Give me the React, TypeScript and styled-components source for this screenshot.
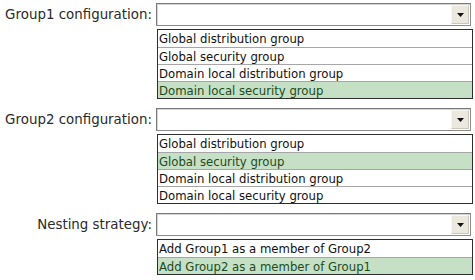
import styled, { createGlobalStyle } from "styled-components";

const GlobalStyle = createGlobalStyle`
  html, body { margin: 0; padding: 0; background: #fff; }
  body { width: 475px; height: 280px; overflow: hidden; }
`;

type Field = {
  label: string;
  options: string[];
  selected: number;
};

const fields: Field[] = [
  {
    label: "Group1 configuration:",
    options: [
      "Global distribution group",
      "Global security group",
      "Domain local distribution group",
      "Domain local security group",
    ],
    selected: 3,
  },
  {
    label: "Group2 configuration:",
    options: [
      "Global distribution group",
      "Global security group",
      "Domain local distribution group",
      "Domain local security group",
    ],
    selected: 1,
  },
  {
    label: "Nesting strategy:",
    options: ["Add Group1 as a member of Group2", "Add Group2 as a member of Group1"],
    selected: 1,
  },
];

const App: React.FC = () => {
  return (
    <>
      <GlobalStyle />
      <StyledPage>
        {fields.map(f => (
          <StyledField key={f.label}>
            <StyledLabel>{f.label}</StyledLabel>
            <StyledColumn>
              <StyledSelect>
                <StyledArrowButton>
                  <svg width="7" height="4" viewBox="0 0 7 4">
                    <path d="M0 0 L7 0 L3.5 4 Z" fill="#111" />
                  </svg>
                </StyledArrowButton>
              </StyledSelect>
              <StyledList>
                {f.options.map((o, i) => (
                  <StyledOption key={o} $active={i === f.selected}>
                    {o}
                  </StyledOption>
                ))}
              </StyledList>
            </StyledColumn>
          </StyledField>
        ))}
      </StyledPage>
    </>
  );
};

const StyledPage = styled.div`
  display: flex; flex-direction: column; gap: 9px;
  padding: 3px 3px 0 0;
`;

const StyledField = styled.div`
  display: grid; grid-template-columns: 156px 316px; align-items: start;
`;

const StyledLabel = styled.div`
  height: 23px; display: flex; align-items: center; justify-content: flex-end;
  padding-right: 4px;
  font-family: "DejaVu Sans", sans-serif; font-size: 13.4px; color: #2a2a2a;
  white-space: nowrap;
`;

const StyledColumn = styled.div`
  display: flex; flex-direction: column; gap: 3px;
`;

const StyledSelect = styled.div`
  box-sizing: border-box; width: 315px; height: 23px;
  border: 1px solid #8c8c8c; border-top-color: #7a7a7a; border-left-color: #7a7a7a;
  box-shadow: inset 1px 1px 0 #d4d4d4;
  background: #fff;
  display: flex; justify-content: flex-end; align-items: stretch;
  padding: 1px 1px 1px 0;
`;

const StyledArrowButton = styled.div`
  width: 16px;
  background: #ebe9df;
  border-left: 1px solid #f7f6f0; border-top: 1px solid #f7f6f0;
  border-right: 1px solid #cbc8ba; border-bottom: 1px solid #cbc8ba;
  display: flex; align-items: center; justify-content: center;
  padding-top: 1px;
`;

const StyledList = styled.div`
  box-sizing: border-box; width: 316px; margin-left: 1px;
  border: 1px solid #2e2e2e;
  display: flex; flex-direction: column;
`;

const StyledOption = styled.div<{ $active: boolean }>`
  box-sizing: border-box; height: 17px;
  padding-left: 1px; padding-top: 1px;
  display: flex; align-items: center;
  font-family: "DejaVu Sans", sans-serif; font-size: 11.7px;
  color: ${p => (p.$active ? "#1d4a1d" : "#111")};
  background: ${p => (p.$active ? "#c6e0c6" : "#fff")};
  white-space: nowrap;
  & + & { border-top: 1px solid #a6a6a6; }
`;

export default App;
